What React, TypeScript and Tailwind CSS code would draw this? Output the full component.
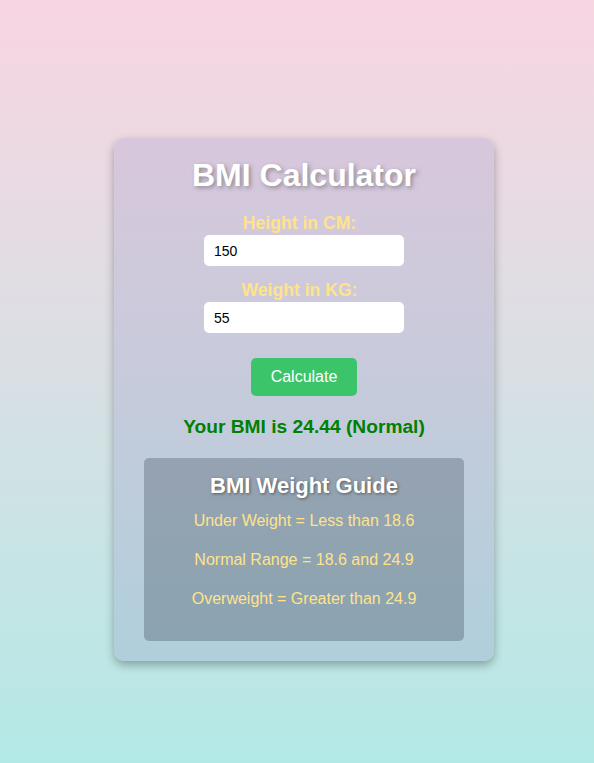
import { useState } from 'react';

export default function App() {
  const [height, setHeight] = useState('150');
  const [weight, setWeight] = useState('55');
  const [result, setResult] = useState('Your BMI is 24.44 (Normal)');

  const calculate = () => {
    const h = Number(height) / 100;
    const w = Number(weight);
    if (!h || !w) {
      setResult('Please enter valid values');
      return;
    }
    const bmi = w / (h * h);
    const label = bmi < 18.6 ? 'Under Weight' : bmi <= 24.9 ? 'Normal' : 'Overweight';
    setResult(`Your BMI is ${bmi.toFixed(2)} (${label})`);
  };

  return (
    <div className="min-h-[763px] bg-gradient-to-b from-[#f8d5e2] to-[#b2e9e6] pt-[138px] pb-[102px] pl-[14px] font-['Liberation_Sans',Arial,sans-serif]">
      <div className="mx-auto w-[380px] rounded-[10px] bg-gradient-to-b from-[#d8c7dc] to-[#b0cfdb] px-[30px] pt-[19px] pb-[20px] text-center shadow-[0_4px_10px_rgba(0,0,0,0.3)]">
        <h1 className="text-[32px] font-bold leading-[37px] text-white [text-shadow:2px_2px_4px_rgba(80,80,80,0.5)]">
          BMI Calculator
        </h1>

        <label className="mt-[19px] block pr-[9px] text-[17.6px] font-bold leading-[21px] text-[#ffe38a]">Height in CM:</label>
        <input
          value={height}
          onChange={e => setHeight(e.target.value)}
          className="mx-auto mt-[1px] block h-[31px] w-[200px] rounded-[5px] bg-white px-[10px] text-[14px] text-black outline-none"
        />

        <label className="mt-[14px] block pr-[9px] text-[17.6px] font-bold leading-[21px] text-[#ffe38a]">Weight in KG:</label>
        <input
          value={weight}
          onChange={e => setWeight(e.target.value)}
          className="mx-auto mt-[1px] block h-[31px] w-[200px] rounded-[5px] bg-white px-[10px] text-[14px] text-black outline-none"
        />

        <button
          onClick={calculate}
          className="mt-[25px] h-[38px] w-[106px] rounded-[5px] bg-[#3cc46b] text-[16px] text-white"
        >
          Calculate
        </button>

        <p className="mt-[19px] text-[19.2px] font-bold leading-[23px] text-[#008000]">{result}</p>

        <div className="mt-[20px] rounded-[5px] bg-[rgba(40,55,70,0.28)] pt-[15px] pb-[32px]">
          <h2 className="text-[22px] font-bold leading-[25px] text-white [text-shadow:1px_1px_3px_rgba(60,60,60,0.7)]">
            BMI Weight Guide
          </h2>
          <p className="mt-[13px] text-[16px] leading-[20px] text-[#ffe38a]">Under Weight = Less than 18.6</p>
          <p className="mt-[19px] text-[16px] leading-[20px] text-[#ffe38a]">Normal Range = 18.6 and 24.9</p>
          <p className="mt-[19px] text-[16px] leading-[20px] text-[#ffe38a]">Overweight = Greater than 24.9</p>
        </div>
      </div>
    </div>
  );
}
